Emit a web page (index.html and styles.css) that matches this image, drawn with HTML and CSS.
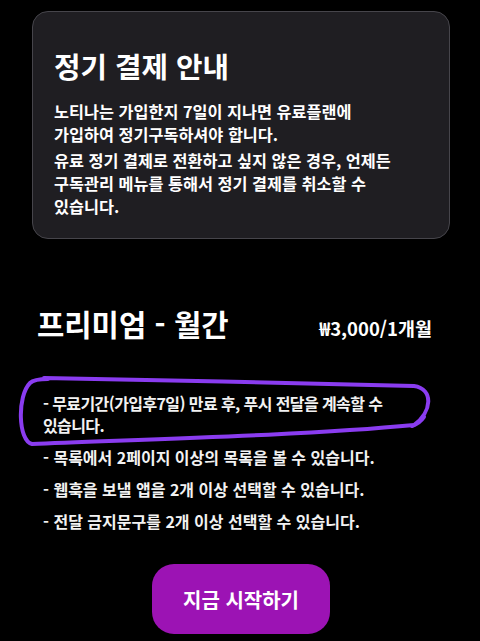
FILE: index.html
```html
<!DOCTYPE html>
<html lang="ko">
<head>
<meta charset="utf-8">
<link rel="stylesheet" href="styles.css">
</head>
<body>
<div class="page">
  <section class="card">
    <h1 class="card-title">정기 결제 안내</h1>
    <p class="card-text">노티나는 가입한지 7일이 지나면 유료플랜에<br>가입하여 정기구독하셔야 합니다.</p>
    <p class="card-text">유료 정기 결제로 전환하고 싶지 않은 경우, 언제든<br>구독관리 메뉴를 통해서 정기 결제를 취소할 수<br>있습니다.</p>
  </section>

  <section class="plan">
    <div class="plan-head">
      <h2 class="plan-name">프리미엄 - 월간</h2>
      <span class="plan-price">₩3,000/1개월</span>
    </div>
    <ul class="features">
      <li class="feature-tight">- 무료기간(가입후7일) 만료 후, 푸시 전달을 계속할 수<br>있습니다.</li>
      <li>- 목록에서 2페이지 이상의 목록을 볼 수 있습니다.</li>
      <li>- 웹훅을 보낼 앱을 2개 이상 선택할 수 있습니다.</li>
      <li>- 전달 금지문구를 2개 이상 선택할 수 있습니다.</li>
    </ul>
    <div class="cta-row">
      <button class="cta">지금 시작하기</button>
    </div>
  </section>

  <svg class="scribble" width="480" height="641" viewBox="0 0 480 641">
    <path d="M 44 378 C 160 380, 300 383, 414 386 C 434 389, 432 412, 414 425 C 300 436, 120 440, 32 444 C 18 441, 17 396, 30 383 C 33 380, 38 379, 48 379" />
    <path d="M 412 426 C 418 424, 422 420, 424 417" />
  </svg>
</div>
</body>
</html>
```

FILE: styles.css
```css
html, body {
  margin: 0;
  padding: 0;
  background: #000;
}

body {
  font-family: "Noto Sans CJK KR", "Noto Sans", sans-serif;
  color: #f4f4f4;
  width: 480px;
  height: 641px;
  overflow: hidden;
}

.page {
  position: relative;
  box-sizing: border-box;
  width: 480px;
  height: 641px;
  padding-top: 11px;
}

.card {
  margin: 0 30px 0 32px;
  padding: 36px 18px 20px 21px;
  background: #1f1e22;
  border: 1.5px solid #46454b;
  border-radius: 16px;
}

.card-title {
  margin: 0 0 16px;
  font-size: 28.8px;
  font-weight: 700;
  line-height: 36px;
  color: #fff;
}

.card-text {
  margin: 0 0 3px;
  font-size: 16.3px;
  font-weight: 600;
  line-height: 23px;
  color: #fff;
}

.card-text:last-child {
  margin-bottom: 0;
}

.plan {
  padding: 67px 48px 0 37px;
}

.plan-head {
  display: flex;
  justify-content: space-between;
  align-items: baseline;
}

.plan-name {
  margin: 0;
  font-size: 29.7px;
  font-weight: 700;
  line-height: 36px;
  color: #fff;
}

.plan-price {
  font-size: 18.5px;
  font-weight: 600;
  color: #fff;
}

.features {
  list-style: none;
  margin: 50px 0 0;
  padding: 0 0 0 6px;
  display: flex;
  flex-direction: column;
  gap: 10px;
}

.features li {
  font-size: 16px;
  line-height: 22px;
  font-weight: 600;
  color: #f2f2f2;
}

.features .feature-tight {
  letter-spacing: -0.6px;
}

.cta-row {
  display: flex;
  justify-content: center;
  margin-top: 32px;
  padding-left: 13px;
}

.cta {
  width: 178px;
  height: 70px;
  border: none;
  border-radius: 22px;
  background: #9c13b4;
  color: #fff;
  font-family: "Noto Sans CJK KR", "Noto Sans", sans-serif;
  font-size: 20px;
  font-weight: 700;
}

.scribble {
  position: absolute;
  left: 0;
  top: 0;
  pointer-events: none;
}

.scribble path {
  fill: none;
  stroke: #8a3cf0;
  stroke-width: 4;
  stroke-linecap: round;
  stroke-linejoin: round;
}
```
